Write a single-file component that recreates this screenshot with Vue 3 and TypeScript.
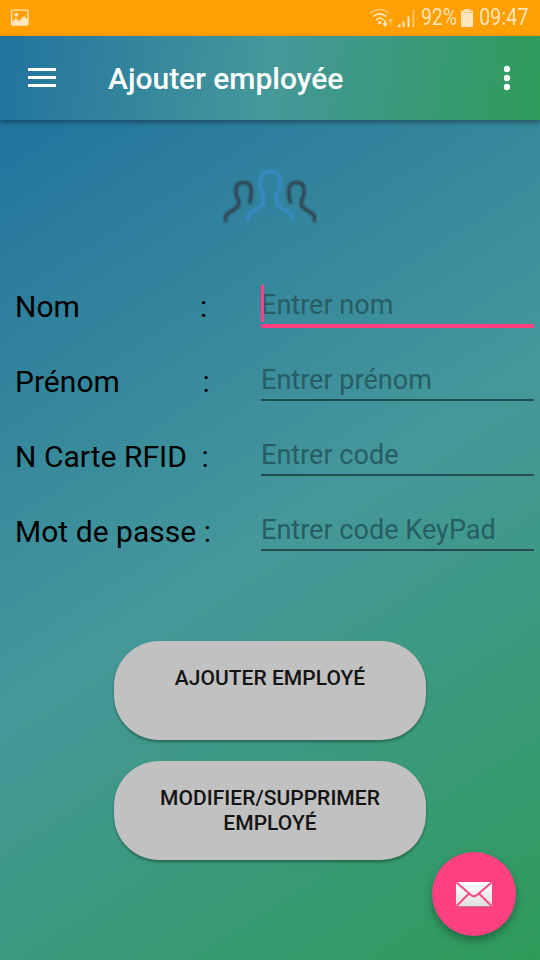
<script setup lang="ts">
interface Field { label: string; gap: number; placeholder: string; focused?: boolean }

const fields: Field[] = [
  { label: 'Nom', gap: 120, placeholder: 'Entrer nom', focused: true },
  { label: 'Prénom', gap: 82.5, placeholder: 'Entrer prénom' },
  { label: 'N Carte RFID', gap: 14.5, placeholder: 'Entrer code' },
  { label: 'Mot de passe', gap: 7.5, placeholder: 'Entrer code KeyPad' },
]
const actions: string[] = ['Ajouter employé', 'Modifier/Supprimer employé']
</script>

<template>
  <div class="screen">
    <div class="status">
      <svg class="photo" width="20" height="18" viewBox="0 0 20 18">
        <rect x="1.6" y="1.1" width="16.4" height="15" rx="1" fill="none" stroke="#ffe5bd" stroke-width="1.4" />
        <path d="M2 13l4-4 3 3 5-5 4 4v5H2z" fill="#ffe5bd" />
        <circle cx="6.3" cy="5.8" r="2" fill="#ffe5bd" />
      </svg>
      <div class="indicators">
        <svg class="signals" width="50" height="20" viewBox="0 0 50 20">
          <g fill="none" stroke-width="1.6">
            <path d="M1.3 5.2Q10.7-2.2 20.1 5.2" stroke="#ffc66b" />
            <path d="M4.1 8.500Q10.7 3.1 17.5 8.500M7 11.800Q10.7 8.700 14.5 11.800" stroke="#ffe9c8" />
          </g>
          <circle cx="10.6" cy="14.700" r="1.6" fill="#ffe9c8" />
          <path d="M16 12v5.500M13.800 15.300l2.200 2.400 2.200-2.400" fill="none" stroke="#ffe9c8" stroke-width="1.500" />
          <path d="M21.500 17v-6M19.400 13.400l2.100-2.400 2.100 2.400" fill="none" stroke="#ffc66b" stroke-width="1.400" />
          <path d="M27.500 19l4-3.600V19zM33.500 13.500h2V19h-2zM38.500 8.500h2V19h-2z" fill="#ffe9c8" />
          <path d="M43.500 1.500h1.800V19h-1.800z" fill="#ffc66b" />
        </svg>
        <span class="percent">92%</span>
        <svg class="battery" width="12" height="18" viewBox="0 0 12 18">
          <path d="M3 0h6v1.700H3z" fill="#ffe5bd" />
          <rect y="1.500" width="12" height="16.500" rx="1" fill="#ffe5bd" />
          <path d="M1 3.500h10" stroke="#ffca79" />
        </svg>
        <span class="time">09:47</span>
      </div>
    </div>

    <header class="toolbar">
      <svg class="menu" width="28" height="20" viewBox="0 0 28 20">
        <path d="M0 1.500h28M0 9.500h28M0 17.500h28" stroke="#fff" stroke-width="3" />
      </svg>
      <h1 class="title">Ajouter employée</h1>
      <svg class="more" width="8" height="26" viewBox="0 0 8 26" fill="#fff">
        <circle cx="4" cy="4" r="3.200" />
        <circle cx="4" cy="13" r="3.200" />
        <circle cx="4" cy="22" r="3.200" />
      </svg>
    </header>

    <main class="content">
      <svg class="people" width="92" height="54" viewBox="0 0 92 54">
        <g fill="none" stroke-width="3.600">
          <path d="M1.500 55V49.500Q1.500 47 4 45.500L12 40.300Q14.700 38.500 14.700 35.500V33Q12 29 12 24V22Q12 14.500 19.500 14.500T27.300 22V25Q27.300 30 25.300 35.500" stroke="#31424e" />
          <path d="M90.500 55V49.500Q90.500 47 88 45.500L80 40.300Q77.300 38.500 77.300 35.500V33Q80 29 80 24V22Q80 14.500 72.500 14.500T64.700 22V25Q64.700 30 66.700 35.500" stroke="#31424e" />
          <path d="M24 53V49Q24 46 27 44.500L36 39Q39 37 39 34V25Q36 21 36 15V14Q36 3.500 46 3.500T56 14V15Q56 21 53 25V34Q53 37 56 39L65 44.500Q68 46 68 49V53" stroke="#388bc4" />
        </g>
      </svg>

      <form class="form">
        <div v-for="field in fields" :key="field.label" class="row">
          <label class="label">{{ field.label }}<span :style="{ marginLeft: field.gap + 'px' }">:</span></label>
          <div class="entry" :class="{ focused: field.focused }">
            <i v-if="field.focused" class="caret"></i>
            <span class="hint">{{ field.placeholder }}</span>
          </div>
        </div>
      </form>

      <div class="actions">
        <button v-for="action in actions" :key="action" class="action" type="button">{{ action }}</button>
      </div>
    </main>

    <button class="fab" type="button" aria-label="Message">
      <svg width="38" height="28" viewBox="0 0 38 28">
        <defs>
          <linearGradient id="paper" x1="0" y1="0" x2="0" y2="1">
            <stop stop-color="#fff" />
            <stop offset="1" stop-color="#dedede" />
          </linearGradient>
        </defs>
        <rect x="1" y="2" width="36" height="24.500" rx="1" fill="url(#paper)" />
        <path d="M1.500 26.600h35" stroke="#b6647e" stroke-width=".8" />
        <path d="M1.500 2.500l14.500 12.500q3 2.500 6 0L36.500 2.500M1.500 26l12.500-12.500M36.500 26l-12.500-12.500" fill="none" stroke="#f94b80" stroke-width="2" />
      </svg>
    </button>
  </div>
</template>

<style>
body { margin: 0; }
</style>

<style scoped>
.screen {
  position: relative;
  display: flex;
  flex-direction: column;
  width: 540px;
  height: 960px;
  overflow: hidden;
  font-family: Roboto, "Liberation Sans", sans-serif;
}
.status {
  display: flex;
  align-items: center;
  justify-content: space-between;
  box-sizing: border-box;
  height: 36px;
  flex: none;
  padding: 0 11px 0 10px;
  background: #ffa000;
  color: #ffe5bd;
}
.indicators { display: flex; align-items: center; height: 36px; }
.percent, .time {
  font-size: 23px;
  line-height: 38px;
  transform-origin: left center;
  white-space: nowrap;
}
.signals { margin-right: 2px; }
.percent { width: 36px; transform: scaleX(.84); }
.battery { margin: 0 6px 0 4px; }
.time { width: 50px; transform: scaleX(.86); }
.toolbar {
  z-index: 1;
  display: flex;
  align-items: center;
  box-sizing: border-box;
  height: 84px;
  flex: none;
  padding: 0 29px 0 28px;
  background: linear-gradient(98.840deg, #22739f, #45989a 50%, #2e9b59);
  box-shadow: 0 2px 5px rgba(0, 0, 0, .4);
}
.title {
  flex: 1;
  margin: 2px 0 0 52px;
  color: #fff;
  font-size: 30px;
  font-weight: 500;
  line-height: 36px;
}
.content {
  display: flex;
  flex: 1;
  flex-direction: column;
  align-items: center;
  padding-top: 48px;
  background: linear-gradient(147.260deg, #22739f, #45989a 50%, #2e9b59);
}
.people { filter: blur(.8px); }
.form { align-self: stretch; margin-top: 48px; }
.row { display: flex; height: 75px; }
.label {
  width: 246px;
  padding-left: 15px;
  color: #000;
  font-size: 30px;
  letter-spacing: .03px;
  line-height: 74px;
  white-space: nowrap;
}
.entry {
  position: relative;
  box-sizing: border-box;
  width: 273px;
  height: 56px;
  border-bottom: 2px solid #254d50;
}
.entry.focused { height: 58px; border-bottom: 4px solid #ff4081; }
.hint {
  color: #265e64;
  font-size: 27px;
  letter-spacing: .03px;
  line-height: 70px;
  white-space: nowrap;
}
.caret {
  position: absolute;
  top: 15px;
  left: 0;
  width: 3px;
  height: 37px;
  background: #ff4081;
}
.actions { display: flex; flex-direction: column; gap: 21px; margin-top: 70.500px; }
.action {
  display: flex;
  justify-content: center;
  box-sizing: border-box;
  width: 312px;
  height: 99px;
  padding: 25px 40px 0;
  border: 0;
  border-radius: 45px;
  background: #c1c1c1;
  box-shadow: 0 2px 3px rgba(0, 0, 0, .35);
  color: #141414;
  font: 500 21px/25px Roboto, "Liberation Sans", sans-serif;
  letter-spacing: .04px;
  text-transform: uppercase;
}
.fab {
  position: absolute;
  right: 24px;
  bottom: 24px;
  z-index: 2;
  display: grid;
  place-items: center;
  width: 84px;
  height: 84px;
  padding: 0;
  border: 0;
  border-radius: 50%;
  background: #ff4081;
  box-shadow: 0 5px 9px rgba(0, 0, 0, .3);
}
</style>
